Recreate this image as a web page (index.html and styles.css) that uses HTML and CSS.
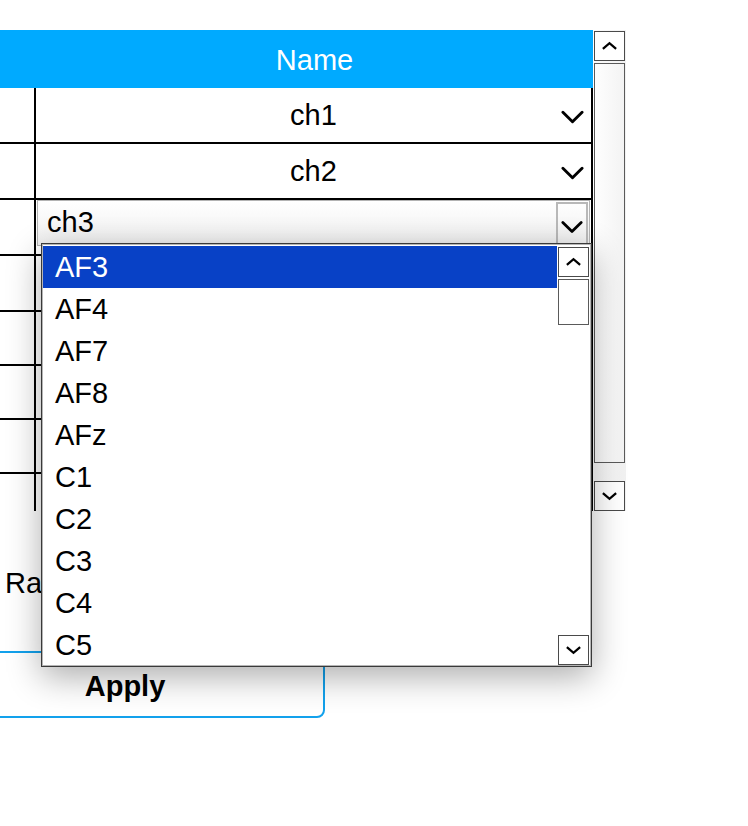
FILE: index.html
```html
<!DOCTYPE html>
<html lang="en">
<head>
<title>Channel Mapping</title>
<link rel="stylesheet" href="styles.css">
</head>
<body>
<div class="app">
  <div class="grid">
    <div class="table">
      <div class="thead">
        <div class="th-idx"></div>
        <div class="th-name">Name</div>
      </div>
      <div class="tbody">
        <div class="row">
          <div class="idx"></div>
          <div class="name">
            <span class="val">ch1</span>
            <svg class="chev" viewBox="0 0 24 14"><polyline points="2,2 12,12 22,2"/></svg>
          </div>
        </div>
        <div class="row">
          <div class="idx"></div>
          <div class="name">
            <span class="val">ch2</span>
            <svg class="chev" viewBox="0 0 24 14"><polyline points="2,2 12,12 22,2"/></svg>
          </div>
        </div>
        <div class="row">
          <div class="idx"></div>
          <div class="edit">
            <div class="combo">
              <span class="combo-text">ch3</span>
              <span class="combo-btn">
                <svg class="chev" viewBox="0 0 24 14"><polyline points="2,2 12,12 22,2"/></svg>
              </span>
            </div>
          </div>
        </div>
        <div class="row"><div class="idx"></div><div class="name"></div></div>
        <div class="row slim"><div class="idx"></div><div class="name"></div></div>
        <div class="row slim"><div class="idx"></div><div class="name"></div></div>
        <div class="row slim"><div class="idx"></div><div class="name"></div></div>
        <div class="filler"><div class="idx"></div></div>
      </div>
    </div>

    <div class="vscroll">
      <div class="sbtn"><svg class="mini" viewBox="0 0 18 10"><polyline points="2,8 9,2 16,8"/></svg></div>
      <div class="thumb big"></div>
      <div class="sbtn down"><svg class="mini" viewBox="0 0 18 10"><polyline points="2,2 9,8 16,2"/></svg></div>
    </div>
  </div>

  <div class="label">Ra</div>
  <button class="apply">Apply</button>

  <!-- open dropdown of the ch3 editor -->
  <div class="popup">
    <div class="list">
      <div class="item selected">AF3</div>
      <div class="item">AF4</div>
      <div class="item">AF7</div>
      <div class="item">AF8</div>
      <div class="item">AFz</div>
      <div class="item">C1</div>
      <div class="item">C2</div>
      <div class="item">C3</div>
      <div class="item">C4</div>
      <div class="item">C5</div>
    </div>
    <div class="vscroll small">
      <div class="sbtn"><svg class="mini" viewBox="0 0 18 10"><polyline points="2,8 9,2 16,8"/></svg></div>
      <div class="thumb"></div>
      <div class="sbtn down"><svg class="mini" viewBox="0 0 18 10"><polyline points="2,2 9,8 16,2"/></svg></div>
    </div>
  </div>
</div>
</body>
</html>
```

FILE: styles.css
```css
* {
  box-sizing: border-box;
}
body {
  margin: 0;
  font-family: "Liberation Sans", Arial, sans-serif;
  font-size: 29px;
  color: #000;
  background: #fff;
}
.app {
  position: relative;
  padding-top: 30px;
}
.grid {
  display: flex;
  align-items: flex-start;
}
.table {
  width: 593px;
  height: 481px;
  display: flex;
  flex-direction: column;
}
.thead {
  height: 58px;
  display: flex;
  background: #00aaff;
  color: #fff;
}
.th-idx {
  width: 36px;
}
.th-name {
  flex: 1;
  display: flex;
  align-items: center;
  justify-content: center;
  padding-top: 2px;
}
.tbody {
  flex: 1;
  display: flex;
  flex-direction: column;
  border-right: 2px solid #000;
}
.row {
  height: 56px;
  display: flex;
  border-bottom: 2px solid #000;
}
.row.slim {
  height: 54px;
}
.idx {
  width: 36px;
  border-right: 2px solid #000;
}
.filler {
  flex: 1;
  display: flex;
}
.name {
  flex: 1;
  display: grid;
  grid-template-columns: 36px 1fr 36px;
  align-items: center;
  padding-top: 4px;
}
.val {
  grid-column: 2;
  text-align: center;
  margin-top: -3px;
}
.chev {
  width: 23px;
  height: 14px;
  fill: none;
  stroke: #000;
  stroke-width: 3;
  stroke-linecap: round;
  stroke-linejoin: round;
}
.name .chev {
  grid-column: 3;
  justify-self: end;
  margin-right: 7px;
}
.edit {
  flex: 1;
  padding: 0 1px;
}
.combo {
  height: 46px;
  display: flex;
  align-items: center;
  border: 1px solid #b3b3b3;
  background: linear-gradient(#ffffff, #efefef);
  padding-left: 9px;
}
.combo-text {
  flex: 1;
  padding-bottom: 1px;
}
.combo-btn {
  width: 32px;
  align-self: stretch;
  display: flex;
  align-items: center;
  justify-content: center;
  border: 2px solid #b8b8b8;
  margin: 1px 1px 0 0;
  padding-top: 6px;
}
.combo-btn .chev {
  width: 22px;
}

/* scrollbars */
.vscroll {
  width: 32px;
  height: 481px;
  margin-left: 1px;
  display: flex;
  flex-direction: column;
  padding-top: 1px;
  background: linear-gradient(90deg, #fbfbfb, #f1f1f1);
}
.sbtn {
  width: 31px;
  height: 30px;
  border: 1px solid #4a4a4a;
  background: #fff;
  display: flex;
  align-items: center;
  justify-content: center;
}
.sbtn.down {
  margin-top: auto;
}
.mini {
  width: 17px;
  height: 10px;
  fill: none;
  stroke: #000;
  stroke-width: 2.4;
}
.thumb {
  width: 31px;
  height: 46px;
  margin-top: 2px;
  border: 1px solid #5a5a5a;
  background: #fff;
}
.thumb.big {
  height: 400px;
  background: linear-gradient(90deg, #fefefe, #f3f3f3);
}

.label {
  margin-top: 55px;
  padding-left: 5px;
  line-height: 34px;
}
.apply {
  display: block;
  margin: 51px 0 0 -75px;
  width: 400px;
  height: 67px;
  padding-top: 4px;
  border: 2px solid #12a1ec;
  border-radius: 8px;
  background: #fff;
  font-family: inherit;
  font-size: 29px;
  font-weight: bold;
  color: #000;
}

/* dropdown popup */
.popup {
  position: absolute;
  left: 41px;
  top: 243px;
  width: 551px;
  height: 424px;
  display: flex;
  padding: 2px 1px 1px 1px;
  background: #fff;
  border: 1px solid #3a3a3a;
  box-shadow: inset 0 0 0 1px #b5b5b5, 0 10px 32px rgba(0, 0, 0, 0.32);
}
.list {
  flex: 1;
  overflow: hidden;
}
.item {
  height: 42px;
  line-height: 42px;
  padding-left: 12px;
  margin-right: 1px;
}
.item.selected {
  background: #0841c6;
  color: #fff;
}
.vscroll.small {
  height: auto;
  margin-left: 0;
  background: #fff;
}
```
